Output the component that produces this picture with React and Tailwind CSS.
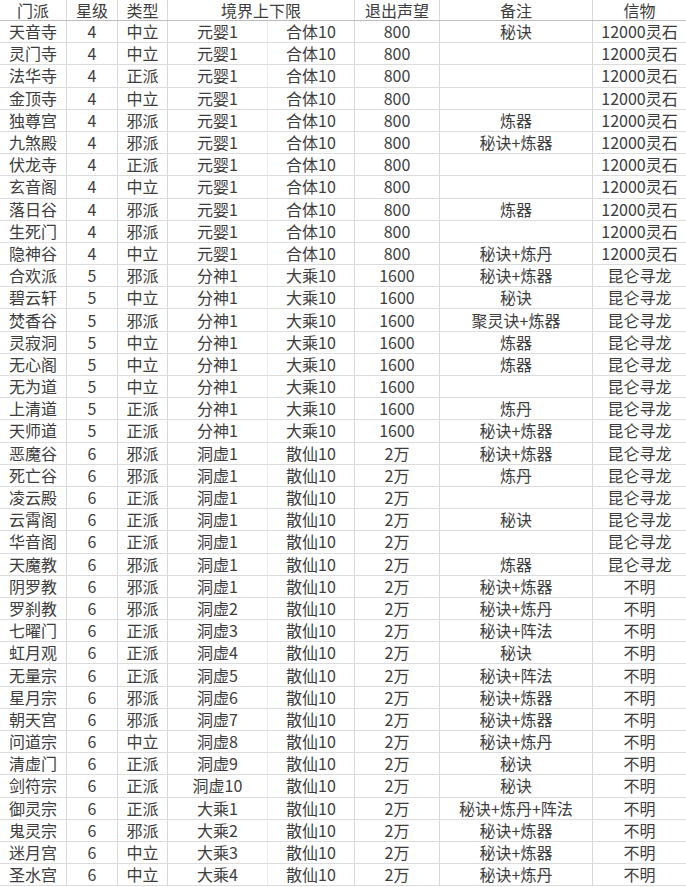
// Sect table (spreadsheet style)
const rows = [
  ["天音寺", "4", "中立", "元婴1", "合体10", "800", "秘诀", "12000灵石"],
  ["灵门寺", "4", "中立", "元婴1", "合体10", "800", "", "12000灵石"],
  ["法华寺", "4", "正派", "元婴1", "合体10", "800", "", "12000灵石"],
  ["金顶寺", "4", "中立", "元婴1", "合体10", "800", "", "12000灵石"],
  ["独尊宫", "4", "邪派", "元婴1", "合体10", "800", "炼器", "12000灵石"],
  ["九煞殿", "4", "邪派", "元婴1", "合体10", "800", "秘诀+炼器", "12000灵石"],
  ["伏龙寺", "4", "正派", "元婴1", "合体10", "800", "", "12000灵石"],
  ["玄音阁", "4", "中立", "元婴1", "合体10", "800", "", "12000灵石"],
  ["落日谷", "4", "邪派", "元婴1", "合体10", "800", "炼器", "12000灵石"],
  ["生死门", "4", "邪派", "元婴1", "合体10", "800", "", "12000灵石"],
  ["隐神谷", "4", "中立", "元婴1", "合体10", "800", "秘诀+炼丹", "12000灵石"],
  ["合欢派", "5", "邪派", "分神1", "大乘10", "1600", "秘诀+炼器", "昆仑寻龙"],
  ["碧云轩", "5", "中立", "分神1", "大乘10", "1600", "秘诀", "昆仑寻龙"],
  ["焚香谷", "5", "邪派", "分神1", "大乘10", "1600", "聚灵诀+炼器", "昆仑寻龙"],
  ["灵寂洞", "5", "中立", "分神1", "大乘10", "1600", "炼器", "昆仑寻龙"],
  ["无心阁", "5", "中立", "分神1", "大乘10", "1600", "炼器", "昆仑寻龙"],
  ["无为道", "5", "中立", "分神1", "大乘10", "1600", "", "昆仑寻龙"],
  ["上清道", "5", "正派", "分神1", "大乘10", "1600", "炼丹", "昆仑寻龙"],
  ["天师道", "5", "正派", "分神1", "大乘10", "1600", "秘诀+炼器", "昆仑寻龙"],
  ["恶魔谷", "6", "邪派", "洞虚1", "散仙10", "2万", "秘诀+炼器", "昆仑寻龙"],
  ["死亡谷", "6", "邪派", "洞虚1", "散仙10", "2万", "炼丹", "昆仑寻龙"],
  ["凌云殿", "6", "正派", "洞虚1", "散仙10", "2万", "", "昆仑寻龙"],
  ["云霄阁", "6", "正派", "洞虚1", "散仙10", "2万", "秘诀", "昆仑寻龙"],
  ["华音阁", "6", "正派", "洞虚1", "散仙10", "2万", "", "昆仑寻龙"],
  ["天魔教", "6", "邪派", "洞虚1", "散仙10", "2万", "炼器", "昆仑寻龙"],
  ["阴罗教", "6", "邪派", "洞虚1", "散仙10", "2万", "秘诀+炼器", "不明"],
  ["罗刹教", "6", "邪派", "洞虚2", "散仙10", "2万", "秘诀+炼丹", "不明"],
  ["七曜门", "6", "正派", "洞虚3", "散仙10", "2万", "秘诀+阵法", "不明"],
  ["虹月观", "6", "正派", "洞虚4", "散仙10", "2万", "秘诀", "不明"],
  ["无量宗", "6", "正派", "洞虚5", "散仙10", "2万", "秘诀+阵法", "不明"],
  ["星月宗", "6", "邪派", "洞虚6", "散仙10", "2万", "秘诀+炼器", "不明"],
  ["朝天宫", "6", "邪派", "洞虚7", "散仙10", "2万", "秘诀+炼器", "不明"],
  ["问道宗", "6", "中立", "洞虚8", "散仙10", "2万", "秘诀+炼丹", "不明"],
  ["清虚门", "6", "正派", "洞虚9", "散仙10", "2万", "秘诀", "不明"],
  ["剑符宗", "6", "正派", "洞虚10", "散仙10", "2万", "秘诀", "不明"],
  ["御灵宗", "6", "正派", "大乘1", "散仙10", "2万", "秘诀+炼丹+阵法", "不明"],
  ["鬼灵宗", "6", "邪派", "大乘2", "散仙10", "2万", "秘诀+炼器", "不明"],
  ["迷月宫", "6", "中立", "大乘3", "散仙10", "2万", "秘诀+炼器", "不明"],
  ["圣水宫", "6", "中立", "大乘4", "散仙10", "2万", "秘诀+炼丹", "不明"],
];

const cols = "grid grid-cols-[67px_51px_50px_100px_87px_85px_153px_93px]";
const head = "flex items-center justify-center border-r border-[#d9d9d9] leading-[20px]";

export default function App() {
  return (
    <div
      className="w-[686px] h-[887px] overflow-hidden bg-white text-[16px] text-[#3d3d3d]"
      style={{ fontFamily: '"Noto Sans CJK SC", "Liberation Sans", sans-serif' }}
    >
      {/* header */}
      <div className={`${cols} h-[21px] border-b border-[#bdbdbd]`}>
        <div className={head}>门派</div>
        <div className={head}>星级</div>
        <div className={head}>类型</div>
        <div className={`col-span-2 ${head}`}>境界上下限</div>
        <div className={head}>退出声望</div>
        <div className={head}>备注</div>
        <div className="flex items-center justify-center leading-[20px]">信物</div>
      </div>

      {rows.map((r, i) => (
        <div key={i} className={`${cols} h-[22.2px] border-b border-[#dcdcdc]`}>
          {r.map((c, j) => (
            <div
              key={j}
              className={
                j === 7
                  ? "flex items-center justify-center whitespace-nowrap leading-[21px]"
                  : j === 3
                  ? "flex items-center justify-center whitespace-nowrap leading-[21px] border-r border-[#ececec]"
                  : "flex items-center justify-center whitespace-nowrap leading-[21px] border-r border-[#d9d9d9]"
              }
            >
              {c}
            </div>
          ))}
        </div>
      ))}
    </div>
  );
}
